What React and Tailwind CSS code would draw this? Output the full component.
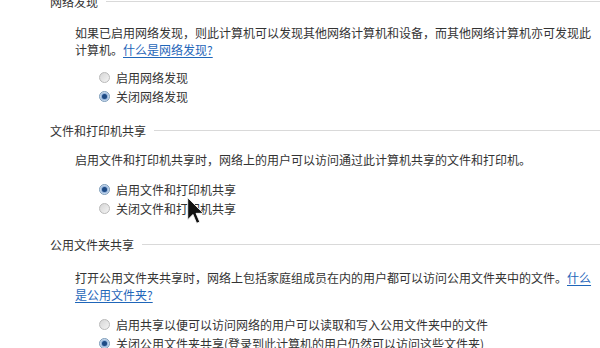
import React from "react";

const font = { fontFamily: '"Noto Sans CJK SC", "Noto Sans", sans-serif' };

function Radio({ checked, label }) {
  return (
    <div className="flex items-center h-[19px] pl-[99px]">
      {checked ? (
        <span className="w-[11px] h-[11px] rounded-full border border-[#7f9db9] bg-[#dfe9f5] flex items-center justify-center">
          <span className="w-[5px] h-[5px] rounded-full bg-[#1e4a84] shadow-[0_0_2px_1px_#6d97cc]" />
        </span>
      ) : (
        <span className="w-[11px] h-[11px] rounded-full border border-[#b9b9b9] bg-gradient-to-br from-[#d6d6d6] to-[#f4f4f4]" />
      )}
      <span className="ml-[6px] whitespace-nowrap">{label}</span>
    </div>
  );
}

function Header({ title, className = "" }) {
  return (
    <div className={`flex items-center h-[17px] pl-[50px] ${className}`}>
      <span className="whitespace-nowrap">{title}</span>
      <span className="flex-1 ml-[8px] border-t border-[#d9d9d9]" />
    </div>
  );
}

function Link({ children }) {
  return <span className="text-[#1f66b9] underline underline-offset-2">{children}</span>;
}

export default function App() {
  return (
    <div
      className="relative w-[600px] h-[348px] overflow-hidden bg-white text-[#333] text-[12px] leading-[17px]"
      style={font}
    >
      <div className="mt-[-7px]">
        <Header title="网络发现" />
        <p className="mt-[14px] pl-[75px] whitespace-nowrap">
          如果已启用网络发现，则此计算机可以发现其他网络计算机和设备，而其他网络计算机亦可发现此
          <br />
          计算机。<Link>什么是网络发现?</Link>
        </p>
        <div className="mt-[10px]">
          <Radio label="启用网络发现" />
          <Radio checked label="关闭网络发现" />
        </div>

        <Header title="文件和打印机共享" className="mt-[16px]" />
        <p className="mt-[12px] pl-[75px] whitespace-nowrap">
          启用文件和打印机共享时，网络上的用户可以访问通过此计算机共享的文件和打印机。
        </p>
        <div className="mt-[12px]">
          <Radio checked label="启用文件和打印机共享" />
          <Radio label="关闭文件和打印机共享" />
        </div>

        <Header title="公用文件夹共享" className="mt-[18px]" />
        <p className="mt-[16px] pl-[75px] whitespace-nowrap">
          打开公用文件夹共享时，网络上包括家庭组成员在内的用户都可以访问公用文件夹中的文件。
          <Link>什么</Link>
          <br />
          <Link>是公用文件夹?</Link>
        </p>
        <div className="mt-[12px]">
          <Radio label="启用共享以便可以访问网络的用户可以读取和写入公用文件夹中的文件" />
          <Radio checked label="关闭公用文件夹共享(登录到此计算机的用户仍然可以访问这些文件夹)" />
        </div>
      </div>

      <svg
        className="absolute left-[187px] top-[197px]"
        width="17"
        height="27"
        viewBox="0 0 12 19"
      >
        <path
          d="M0.5 0.5 L0.5 16 L4.2 12.3 L6.8 18.5 L9 17.6 L6.4 11.5 L11.5 11.5 Z"
          fill="#111"
          stroke="#fff"
          strokeWidth="0.6"
        />
      </svg>
    </div>
  );
}
